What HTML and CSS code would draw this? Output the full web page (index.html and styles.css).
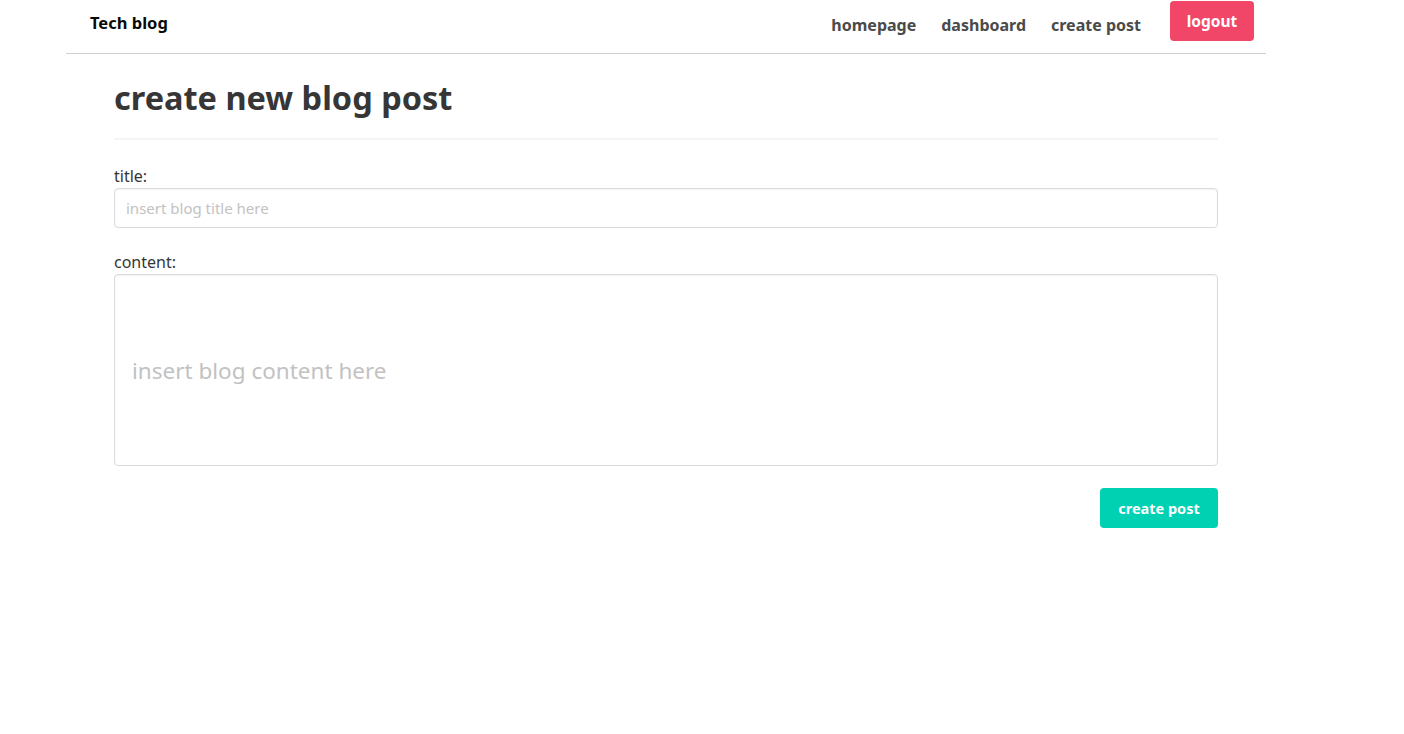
FILE: index.html
```html
<!DOCTYPE html>
<html>
<head>
<meta charset="utf-8">
<link rel="stylesheet" href="styles.css">
</head>
<body>
<div class="page">
  <nav class="navbar">
    <a class="brand">Tech blog</a>
    <div class="nav-end">
      <a class="nav-link">homepage</a>
      <a class="nav-link">dashboard</a>
      <a class="nav-link">create post</a>
      <button class="btn btn-logout">logout</button>
    </div>
  </nav>
  <main class="main">
    <h1 class="title">create new blog post</h1>
    <hr class="divider">
    <form class="form">
      <div class="field">
        <label class="label">title:</label>
        <input class="input" type="text" placeholder="insert blog title here">
      </div>
      <div class="field">
        <label class="label">content:</label>
        <input class="input input-big" type="text" placeholder="insert blog content here">
      </div>
      <div class="actions">
        <button class="btn btn-primary" type="button">create post</button>
      </div>
    </form>
  </main>
</div>
</body>
</html>
```

FILE: styles.css
```css
* { box-sizing: border-box; }
html, body { margin: 0; padding: 0; background: #fff; }
body {
  font-family: "Noto Sans", "Open Sans", "DejaVu Sans", sans-serif;
  color: #363636;
}
.page {
  width: 1200px;
  margin-left: 66px;
}
.navbar {
  height: 54px;
  border-bottom: 1px solid #d0d0d0;
  display: flex;
  align-items: flex-start;
  justify-content: space-between;
}
.brand {
  margin-left: 24px;
  margin-top: 11px;
  font-weight: 700;
  font-size: 16.5px;
  color: #0a0a0a;
}
.nav-end {
  display: flex;
  align-items: flex-start;
  margin-right: 12px;
}
.nav-link {
  font-size: 16px;
  font-weight: 700;
  color: #4a4a4a;
  margin-top: 14px;
  margin-right: 25px;
}
.nav-link:nth-child(3) { margin-right: 29px; }
.btn {
  border: none;
  border-radius: 4px;
  color: #fff;
  font-family: inherit;
  font-weight: 700;
  cursor: pointer;
}
.btn-logout {
  background: #f14668;
  width: 84px;
  height: 40px;
  margin-top: 1px;
  font-size: 15.5px;
  padding: 0 0 1px;
}
.main {
  width: 1104px;
  margin-left: 48px;
  padding-top: 22px;
}
.title {
  margin: 0;
  font-size: 32.5px;
  font-weight: 700;
  line-height: 44px;
  color: #363636;
}
.divider {
  border: none;
  height: 2px;
  background: #f5f5f5;
  margin: 18px 0 25px;
}
.field { margin-bottom: 23px; }
.field + .field { margin-bottom: 22px; }
.label {
  display: block;
  font-size: 16px;
  line-height: 22px;
  margin-bottom: 1px;
  color: #363636;
}
.input {
  display: block;
  width: 100%;
  height: 40px;
  border: 1px solid #dbdbdb;
  border-radius: 4px;
  padding: 0 11px;
  font-family: inherit;
  font-size: 15px;
  color: #363636;
  box-shadow: inset 0 1px 2px rgba(10,10,10,0.05);
}
.input::placeholder { color: #c2c2c2; }
.input-big {
  height: 192px;
  font-size: 22.5px;
  padding: 0 17px;
}
.actions {
  display: flex;
  justify-content: flex-end;
}
.btn-primary {
  background: #00d1b2;
  width: 118px;
  height: 40px;
  font-size: 14.5px;
}
```
